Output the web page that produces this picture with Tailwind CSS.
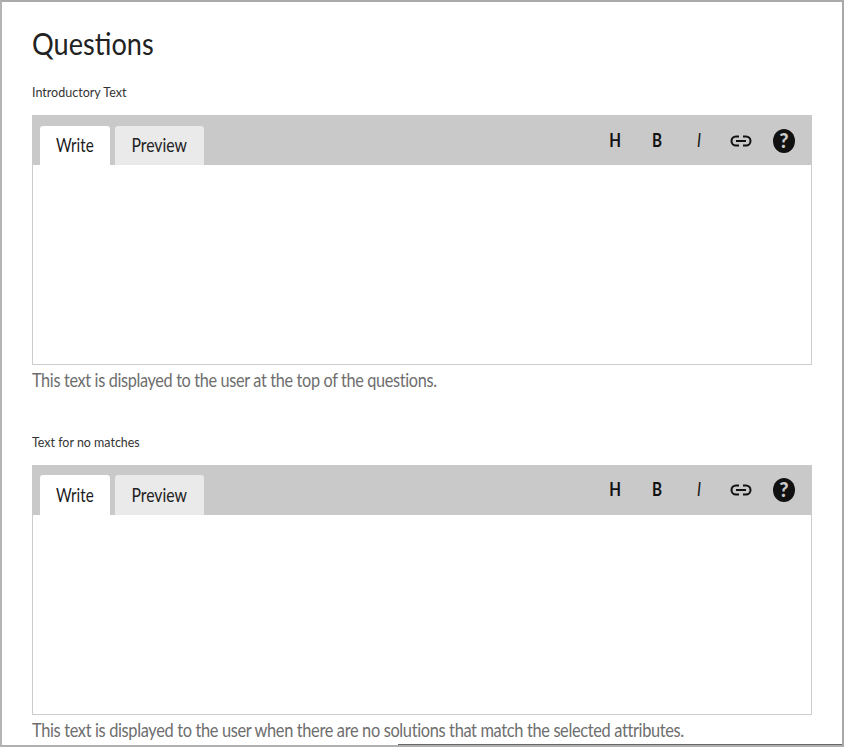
<!DOCTYPE html>
<html><head><meta charset="utf-8">
<script src="https://cdn.jsdelivr.net/npm/@tailwindcss/browser@4"></script>
</head>
<body class="bg-white">
<div class="relative w-[844px] h-[747px] overflow-hidden border-2 border-t-[#aaaaaa] border-l-[#b4b4b4] border-r-[#a8a8a8] border-b-[#b0b0b0] pl-[30px] pr-[30px] font-['Lato',sans-serif] text-[#222222]">
  <h1 class="pt-[22px] pb-[9px] text-[31px] leading-[38px] font-normal text-[#222222] origin-left scale-x-[.875] whitespace-nowrap">Questions</h1>

  <div class="mt-[13px] h-[16px] text-[14px] leading-[16px] text-[#333333] origin-left scale-x-[.895] whitespace-nowrap">Introductory Text</div>
  <section class="mt-[15px] h-[250px] flex flex-col border border-[#cccccc]">
    <div class="h-[50px] shrink-0 bg-[#c9c9c9] flex items-end pl-[8px] pr-[6px] -mx-px -mt-px">
      <div class="w-[70px] h-[39px] pb-[3px] bg-white rounded-t-[3px] flex items-center justify-center text-[#1a1a1a]"><span class="text-[20px] scale-x-[.76]">Write</span></div>
      <div class="ml-[5px] w-[89px] h-[39px] pb-[3px] bg-[#eaeaea] rounded-t-[3px] flex items-center justify-center text-[#222222]"><span class="text-[20px] scale-x-[.79]">Preview</span></div>
      <div class="ml-auto self-start h-[50px] flex items-center text-[19px] font-bold text-[#111111] pt-[1px]">
        <span class="w-[42px] text-center scale-x-[.8]">H</span>
        <span class="w-[42px] text-center scale-x-[.8]">B</span>
        <span class="w-[42px] text-center italic font-normal scale-x-[.8]">I</span>
        <span class="w-[42px] flex justify-center"><svg width="22" height="14" viewBox="0 0 22 14" fill="none" stroke="#111" stroke-width="2"><path d="M9 2.5H6a4.5 4.5 0 0 0 0 9h3M13 2.5h3a4.5 4.5 0 0 1 0 9h-3M6 7h10"/></svg></span>
        <span class="w-[44px] flex justify-center"><svg width="22" height="24" viewBox="0 0 22 24"><ellipse cx="11" cy="12" rx="11" ry="12" fill="#111"/><text x="11" y="19" text-anchor="middle" font-family="Lato, sans-serif" font-weight="900" font-size="20" fill="#c9c9c9">?</text></svg></span>
      </div>
    </div>
    <div class="flex-1 bg-white"></div>
  </section>
  <p class="mt-[4px] h-[22px] text-[19px] leading-[22px] tracking-[-0.4px] text-[#6e6e6e] origin-left scale-x-[.856] whitespace-nowrap">This text is displayed to the user at the top of the questions.</p>

  <div class="mt-[43px] h-[16px] text-[14px] leading-[16px] text-[#333333] origin-left scale-x-[.89] whitespace-nowrap">Text for no matches</div>
  <section class="mt-[15px] h-[250px] flex flex-col border border-[#cccccc]">
    <div class="h-[50px] shrink-0 bg-[#c9c9c9] flex items-end pl-[8px] pr-[6px] -mx-px -mt-px">
      <div class="w-[70px] h-[40px] pb-[2px] bg-white rounded-t-[3px] flex items-center justify-center text-[#1a1a1a]"><span class="text-[20px] scale-x-[.76]">Write</span></div>
      <div class="ml-[5px] w-[89px] h-[40px] pb-[2px] bg-[#eaeaea] rounded-t-[3px] flex items-center justify-center text-[#222222]"><span class="text-[20px] scale-x-[.79]">Preview</span></div>
      <div class="ml-auto self-start h-[50px] flex items-center text-[19px] font-bold text-[#111111] pb-[1px]">
        <span class="w-[42px] text-center scale-x-[.8]">H</span>
        <span class="w-[42px] text-center scale-x-[.8]">B</span>
        <span class="w-[42px] text-center italic font-normal scale-x-[.8]">I</span>
        <span class="w-[42px] flex justify-center"><svg width="22" height="14" viewBox="0 0 22 14" fill="none" stroke="#111" stroke-width="2"><path d="M9 2.5H6a4.5 4.5 0 0 0 0 9h3M13 2.5h3a4.5 4.5 0 0 1 0 9h-3M6 7h10"/></svg></span>
        <span class="w-[44px] flex justify-center"><svg width="22" height="24" viewBox="0 0 22 24"><ellipse cx="11" cy="12" rx="11" ry="12" fill="#111"/><text x="11" y="19" text-anchor="middle" font-family="Lato, sans-serif" font-weight="900" font-size="20" fill="#c9c9c9">?</text></svg></span>
      </div>
    </div>
    <div class="flex-1 bg-white"></div>
  </section>
  <p class="mt-[4px] h-[22px] text-[19px] leading-[22px] tracking-[-0.4px] text-[#6e6e6e] origin-left scale-x-[.862] whitespace-nowrap">This text is displayed to the user when there are no solutions that match the selected attributes.</p>
  <div class="absolute left-[396px] right-0 bottom-0 h-px bg-[#666666]"></div>
</div>
</body></html>
